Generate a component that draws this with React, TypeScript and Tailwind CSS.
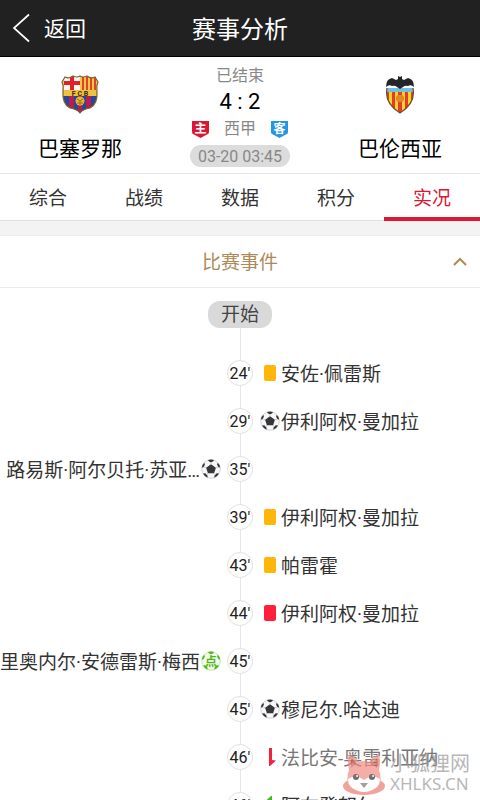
import { useState } from "react";
import clsx from "clsx";

type EventKind = "yellow" | "red" | "goal" | "penalty" | "off" | "on";

type MatchEvent = {
  minute: string;
  side: "home" | "away";
  kind: EventKind;
  player: string;
};

const TABS = ["综合", "战绩", "数据", "积分", "实况"];

const EVENTS: MatchEvent[] = [
  { minute: "24'", side: "away", kind: "yellow", player: "安佐·佩雷斯" },
  { minute: "29'", side: "away", kind: "goal", player: "伊利阿权·曼加拉" },
  { minute: "35'", side: "home", kind: "goal", player: "路易斯·阿尔贝托·苏亚…" },
  { minute: "39'", side: "away", kind: "yellow", player: "伊利阿权·曼加拉" },
  { minute: "43'", side: "away", kind: "yellow", player: "帕雷霍" },
  { minute: "44'", side: "away", kind: "red", player: "伊利阿权·曼加拉" },
  { minute: "45'", side: "home", kind: "penalty", player: "里奥内尔·安德雷斯·梅西" },
  { minute: "45'", side: "away", kind: "goal", player: "穆尼尔.哈达迪" },
  { minute: "46'", side: "away", kind: "off", player: "法比安-奥雷利亚纳" },
  { minute: "46'", side: "away", kind: "on", player: "阿布登努尔" },
];

function HomeCrest() {
  return (
    <svg width="38" height="40" viewBox="0 0 38 40" aria-label="巴塞罗那">
      <defs>
        <clipPath id="barca">
          <path d="M4 3Q8 5 12 2Q16 4 19 2Q22 4 26 2Q30 5 34 3L37 8Q35 12 36 17Q37 30 29 34Q22 35 19 39Q16 35 9 34Q1 30 2 17Q3 12 1 8Z" />
        </clipPath>
      </defs>
      <g clipPath="url(#barca)">
        <rect width="38" height="40" fill="#f5c842" />
        <rect x="3" y="2" width="16" height="14" fill="#fff4ee" />
        <path d="M9 2h4v14H9zM3 7h16v4H3z" fill="#e0202f" />
        <path d="M21 3h2v13h-2zM25 3h2v13h-2zM29 3h2v13h-2zM33 3h2v13h-2z" fill="#e0402f" />
        <rect x="1" y="22" width="36" height="18" fill="#b51e4d" />
        <path d="M1 22h7v18H1zM13 22h4v18h-4zM21 22h4v18h-4zM30 22h7v18h-7z" fill="#27469b" />
        <circle cx="19" cy="27" r="4.500" fill="#edb52d" />
        <path d="M16 25l3 2 3-2M19 27v4M16 29h6" stroke="#98692a" fill="none" />
        <path d="M1 16h36v6H1z" fill="#efc13c" />
      </g>
      <path
        d="M4 3Q8 5 12 2Q16 4 19 2Q22 4 26 2Q30 5 34 3L37 8Q35 12 36 17Q37 30 29 34Q22 35 19 39Q16 35 9 34Q1 30 2 17Q3 12 1 8Z"
        fill="none"
        stroke="#7b6230"
        strokeWidth="1.200"
      />
      <text x="19" y="21.500" textAnchor="middle" fontSize="7" fontWeight="700" fill="#3c2a14">
        F C B
      </text>
    </svg>
  );
}

function AwayCrest() {
  return (
    <svg width="32" height="40" viewBox="0 0 32 40" aria-label="巴伦西亚">
      <defs>
        <clipPath id="valencia">
          <path d="M3 14H29Q32 29 16 39Q0 29 3 14Z" />
        </clipPath>
      </defs>
      <g clipPath="url(#valencia)">
        <rect width="32" height="40" fill="#f8d42c" />
        <path d="M2 17h3v23H2zM8 17h3v23H8zM14 17h4v23h-4zM21 17h3v23h-3zM27 17h3v23h-3z" fill="#e43b2b" />
        <rect width="32" height="18" fill="#74bfe0" />
        <rect x="12" y="21" width="8" height="7" rx="3" fill="#df8a25" />
      </g>
      <path d="M3 14Q0 29 16 39Q32 29 29 14" fill="none" stroke="#7d4a28" strokeWidth="1.200" />
      <path
        d="M2 13Q2 5 8 4L12 6L14 5L14 2L16 3L18 2L18 5L20 6L24 4Q30 5 30 13Q27 10 24 12Q21 11 19 13L16 15L13 13Q11 11 8 12Q5 10 2 13Z"
        fill="#24252b"
      />
    </svg>
  );
}

function SideBadge({ label, className }: { label: string; className: string }) {
  return (
    <span className="relative flex h-[18px] w-[17px] justify-center">
      <svg viewBox="0 0 17 18" className={clsx("absolute inset-0", className)}>
        <path d="M0 1h17v11q0 2-2 2.500l-6.500 3.500l-6.500-3.500q-2-.5-2-2.500z" fill="currentColor" />
      </svg>
      <span className="relative text-[12px] font-bold leading-[18px] text-white">{label}</span>
    </span>
  );
}

function Ball({ penalty = false }: { penalty?: boolean }) {
  const dark = penalty ? "#4fb61c" : "#35353a";
  return (
    <svg width="20" height="20" viewBox="0 0 20 20">
      <circle cx="10" cy="10" r="9.300" fill={penalty ? "#f4fbe9" : "#f7f7f7"} stroke={penalty ? "#b8dfa0" : "#c9c9c9"} strokeWidth=".8" />
      <g fill={dark}>
        <path d="M7 .9Q10 0 13 .9L12 2.600L10 3.300L8 2.600Z" />
        <path d="M.8 8.500Q1.200 5.500 3.300 3.700L3.900 5.500L2.600 8.200Z" />
        <path d="M19.200 8.500Q18.800 5.500 16.700 3.700L16.100 5.500L17.400 8.200Z" />
        <path d="M2 14.500L4.300 14.300L6.500 16.600L6.600 18.800Q3.600 17.500 2 14.500Z" />
        <path d="M18 14.500L15.700 14.300L13.500 16.600L13.400 18.800Q16.400 17.500 18 14.500Z" />
        {!penalty && <path d="M10 5.200L14.900 8.700L13.100 14.200H6.900L5.100 8.700Z" />}
      </g>
      {penalty ? (
        <text x="10" y="14.500" textAnchor="middle" fontSize="12" fontWeight="700" fill={dark}>
          点
        </text>
      ) : (
        <path d="M10 3v2.500M5.300 8.800L2.800 8M14.700 8.800L17.200 8M7 14l-1.500 2M13 14l1.500 2" stroke="#b5b5b5" strokeWidth=".7" />
      )}
    </svg>
  );
}

function EventIcon({ kind }: { kind: EventKind }) {
  if (kind === "goal") return <Ball />;
  if (kind === "penalty") return <Ball penalty />;
  if (kind === "yellow") return <span className="h-4 w-3 rounded-xs bg-[#ffb60a]" />;
  if (kind === "red") return <span className="h-4 w-3 rounded-xs bg-[#ff1f3d]" />;
  return (
    <svg width="20" height="20" viewBox="0 0 20 20">
      {kind === "off" ? (
        <path d="M9 1h3v12l4 .5L10 19H9z" fill="#f5203c" />
      ) : (
        <path d="M12 19H9V7l-4-.5L11 1h1z" fill="#45b81f" />
      )}
    </svg>
  );
}

function EventRow({ event }: { event: MatchEvent }) {
  const icon = (
    <span className="flex w-5 shrink-0 justify-center">
      <EventIcon kind={event.kind} />
    </span>
  );
  const name = (
    <span className={clsx("whitespace-nowrap pt-[3px]", event.kind === "off" ? "text-[#777]" : "text-[#333]")}>
      {event.player}
    </span>
  );

  return (
    <li className="grid h-12 grid-cols-[1fr_26px_1fr] items-center text-[19px] leading-6">
      <div className="flex min-w-0 items-center justify-end gap-px pr-1.5">
        {event.side === "home" && (
          <>
            {name}
            {icon}
          </>
        )}
      </div>
      <div className="flex h-full flex-col items-center">
        <span className="w-px flex-1 bg-[#e6e6e6]" />
        <span className="flex size-[26px] items-center justify-center rounded-full border border-[#e0e0e0] bg-white pt-0.5 text-base text-[#222]">
          {event.minute}
        </span>
        <span className="w-px flex-1 bg-[#e6e6e6]" />
      </div>
      <div className="flex min-w-0 items-center gap-px pl-[7px]">
        {event.side === "away" && (
          <>
            {icon}
            {name}
          </>
        )}
      </div>
    </li>
  );
}

function Watermark() {
  return (
    <div className="pointer-events-none absolute right-2.5 bottom-1 flex items-center gap-1 opacity-70">
      <svg width="44" height="44" viewBox="0 0 44 44">
        <ellipse cx="22" cy="34" rx="21" ry="9" fill="#ec7b72" />
        <path d="M7 2Q13 4 17 10Q22 8 27 10Q31 4 37 2Q39 10 37 18Q42 32 32 38Q22 43 12 38Q2 32 7 18Q5 10 7 2Z" fill="#f08d83" />
        <path d="M9 6l5 6-5 4zM35 6l-5 6 5 4z" fill="#c8605b" />
        <path d="M6 27Q14 22 22 28Q30 22 38 27Q38 35 30 38Q22 42 14 38Q6 35 6 27Z" fill="#fff" />
        <circle cx="14" cy="25" r="3" fill="#333" />
        <circle cx="30" cy="25" r="3" fill="#333" />
        <circle cx="15" cy="24" r="1" fill="#fff" />
        <circle cx="31" cy="24" r="1" fill="#fff" />
        <path d="M18 31h8l-4 5z" fill="#777" />
      </svg>
      <div className="text-[#999]">
        <div className="text-[20px] leading-5">小狐狸网</div>
        <div className="font-['Noto_Sans',sans-serif] text-[17px] leading-5">XHLKS.CN</div>
      </div>
    </div>
  );
}

export default function App() {
  const [activeTab, setActiveTab] = useState("实况");
  const [open, setOpen] = useState(true);

  return (
    <div className="relative h-screen overflow-hidden bg-white font-['Roboto','Noto_Sans_CJK_SC',sans-serif] text-black">
      {/* Title bar */}
      <header className="grid h-[57px] grid-cols-3 items-center border-b border-black bg-[#212122] text-white">
        <button className="flex items-center gap-3.5 pl-3 text-[21px] leading-7">
          <svg width="18" height="30" viewBox="0 0 18 30" fill="none" stroke="currentColor" strokeWidth="1.700">
            <path d="M17 1.500L2 15l15 13.500" />
          </svg>
          <span className="pt-0.5">返回</span>
        </button>
        <h1 className="pt-[3px] text-center text-2xl">赛事分析</h1>
      </header>

      {/* Score */}
      <section className="grid h-[117px] grid-cols-3 border-b border-[#e4e4e4]">
        <div className="flex flex-col items-center gap-[21px] pt-[17px]">
          <HomeCrest />
          <span className="text-[21px] leading-7">巴塞罗那</span>
        </div>
        <div className="flex flex-col items-center pt-[9px] text-base leading-5 text-[#888]">
          <span>已结束</span>
          <strong className="py-1 text-[22px] font-normal leading-6 text-black">4 : 2</strong>
          <div className="flex items-center gap-[15px]">
            <SideBadge label="主" className="text-[#dc1735]" />
            <span className="pt-px">西甲</span>
            <SideBadge label="客" className="text-[#2596e3]" />
          </div>
          <time className="mt-1.5 rounded-full bg-[#dcdcdc] px-2 pt-px leading-[21px]">03-20 03:45</time>
        </div>
        <div className="flex flex-col items-center gap-[21px] pt-[17px]">
          <AwayCrest />
          <span className="text-[21px] leading-7">巴伦西亚</span>
        </div>
      </section>

      {/* Tabs */}
      <nav className="grid h-[47px] grid-cols-5 border-b border-[#dedede]">
        {TABS.map((tab) => (
          <button
            key={tab}
            onClick={() => setActiveTab(tab)}
            className={clsx(
              "-mb-px border-b-4 pt-[7px] text-[19px] leading-6",
              tab === activeTab ? "border-[#dc1735] text-[#dc1735]" : "border-transparent text-[#333]"
            )}
          >
            {tab}
          </button>
        ))}
      </nav>
      <div className="h-3.5 bg-[#f3f3f3]" />

      {/* Match events */}
      <section>
        <button
          onClick={() => setOpen(!open)}
          className="grid h-[53px] w-full grid-cols-3 items-center border-y border-[#ececec] text-[19px] leading-6 text-[#ad8a56]"
        >
          <span className="col-start-2 pt-0.5">比赛事件</span>
          <svg
            width="14"
            height="10"
            viewBox="0 0 14 10"
            fill="none"
            stroke="currentColor"
            strokeWidth="2"
            className={clsx("mr-[13px] justify-self-end", !open && "rotate-180")}
          >
            <path d="M1 8l6-6 6 6" />
          </svg>
        </button>
        {open && (
          <div className="flex flex-col items-center pt-[13px]">
            <span className="rounded-xl bg-[#d9d9d9] px-[13px] pt-px text-[19px] leading-[26px] text-[#444]">开始</span>
            <span className="h-[21px] w-px bg-[#e6e6e6]" />
            <ul className="w-full">
              {EVENTS.map((event, i) => (
                <EventRow key={i} event={event} />
              ))}
            </ul>
          </div>
        )}
      </section>

      <Watermark />
    </div>
  );
}
